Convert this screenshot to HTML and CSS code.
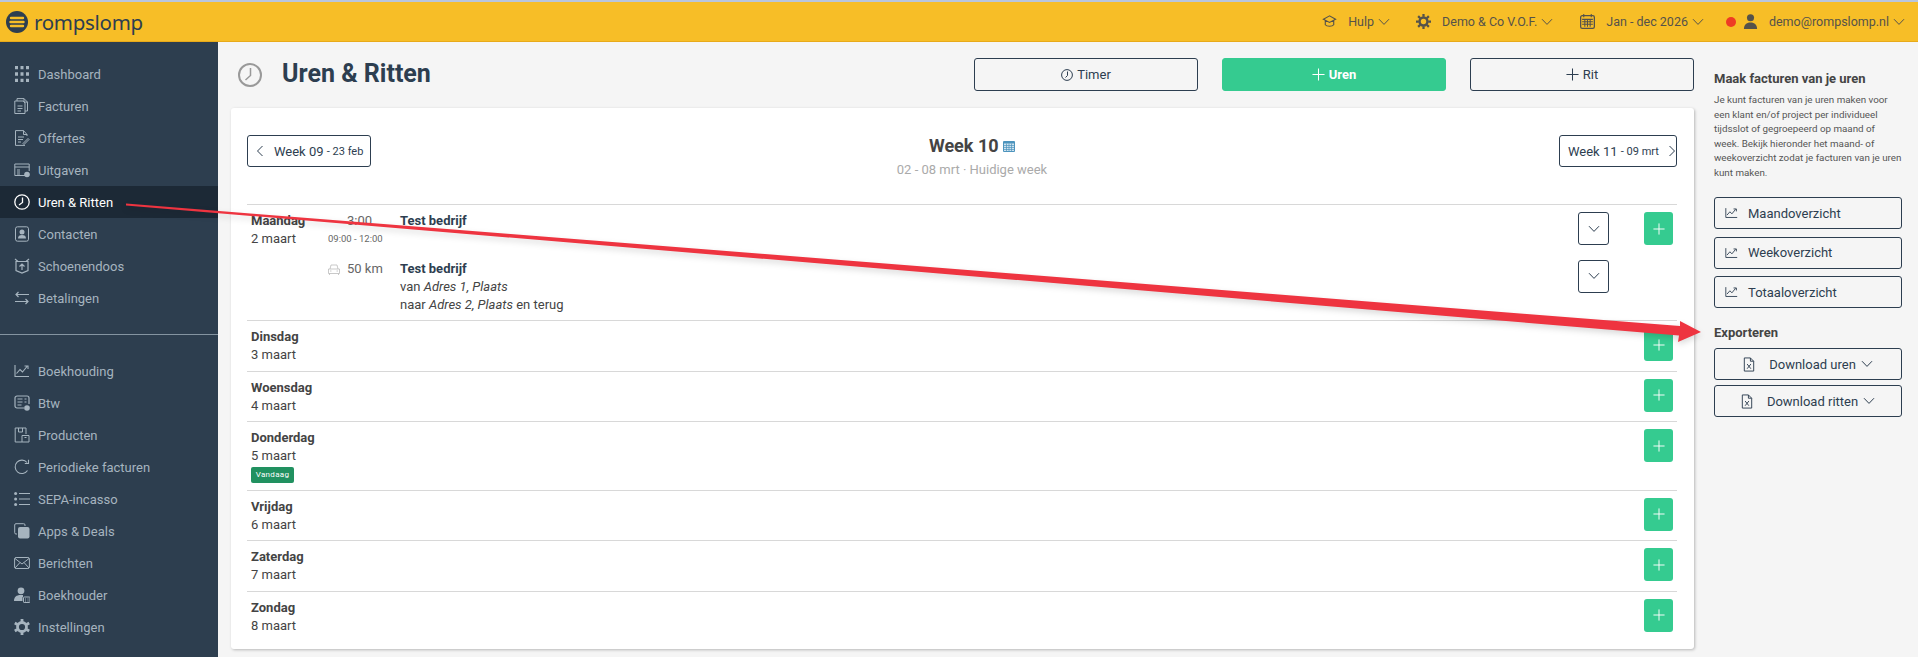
FILE: index.html
```html
<!DOCTYPE html>
<html lang="nl">
<head>
  <meta charset="UTF-8">
  <title>Uren &amp; Ritten - rompslomp</title>
  <link rel="stylesheet" href="styles.css">
</head>
<body>
  <svg class="defs" width="0" height="0">
    <symbol id="chev" viewBox="0 0 12 8"><path d="M1 1.200l5 5.200 5-5.200" fill="none" stroke="currentColor" stroke-width="1"/></symbol>
    <symbol id="plus" viewBox="0 0 14 14"><path d="M7 .5v13M.5 7h13" fill="none" stroke="currentColor" stroke-width="1.100"/></symbol>
    <symbol id="chart" viewBox="0 0 16 14"><path d="M1 1v11.500h14M2.500 9.500l3.500-4 2.500 2.500 4.500-5.500M10.500 2h3.500v3" fill="none" stroke="currentColor" stroke-width="1.100"/></symbol>
    <symbol id="xls" viewBox="0 0 12 16"><path d="M1 1h6.500L11 4.500V15H1zM7.500 1v3.500H11" fill="none" stroke="currentColor" stroke-width="1"/><path d="M4 7.500l4 5M8 7.500l-4 5" fill="none" stroke="currentColor" stroke-width="1"/></symbol>
  </svg>

  <header class="topbar">
    <div class="logo">
      <svg class="logo-mark" viewBox="0 0 22 22"><circle cx="11" cy="11" r="11" fill="#2d3e50"/><path d="M5 7h12M4.500 11h13M5 15h12" stroke="#f7be27" stroke-width="2.400" stroke-linecap="round"/></svg>
      <span class="logo-text">rompslomp</span>
    </div>
    <nav class="topnav">
      <a class="topnav-item topnav-hulp">
        <svg class="top-icon" viewBox="0 0 16 14"><path d="M8 1L1.500 4.500 8 8l6.500-3.500zM3.500 6v4.500C5 12.500 11 12.500 12.500 10.500V6" fill="none" stroke="currentColor" stroke-width="1.200"/></svg>
        <span>Hulp</span>
        <svg class="top-chev"><use href="#chev"/></svg>
      </a>
      <a class="topnav-item topnav-org">
        <svg class="top-icon" viewBox="0 0 16 16"><circle cx="8" cy="8" r="4.200" fill="none" stroke="currentColor" stroke-width="2.600"/><path d="M8 0v3M8 13v3M0 8h3M13 8h3M2.300 2.300l2.200 2.200M11.500 11.500l2.200 2.200M2.300 13.700l2.200-2.200M11.500 4.500l2.200-2.200" stroke="currentColor" stroke-width="2.400"/></svg>
        <span>Demo &amp; Co V.O.F.</span>
        <svg class="top-chev"><use href="#chev"/></svg>
      </a>
      <a class="topnav-item topnav-period">
        <svg class="top-icon" viewBox="0 0 14 14"><rect x=".6" y="1.600" width="12.800" height="11.800" rx="1.500" fill="none" stroke="currentColor" stroke-width="1.200"/><path d="M3.500 0v3M10.500 0v3M2 5h10M2 7.300h10M2 9.600h10M4.500 5v7M7 5v7M9.500 5v7" stroke="currentColor" stroke-width="1"/></svg>
        <span>Jan - dec 2026</span>
        <svg class="top-chev"><use href="#chev"/></svg>
      </a>
      <a class="topnav-item topnav-user">
        <span class="status-dot"></span>
        <svg class="top-icon user-icon" viewBox="0 0 14 16"><circle cx="7" cy="4" r="3.800" fill="currentColor"/><path d="M0 16c0-4.500 2.500-7 7-7s7 2.500 7 7z" fill="currentColor"/></svg>
        <span>demo@rompslomp.nl</span>
        <svg class="top-chev"><use href="#chev"/></svg>
      </a>
    </nav>
  </header>

  <div class="shell">
    <aside class="sidebar">
      <ul class="side-list">
        <li class="side-item"><svg class="side-icon" viewBox="0 0 16 16"><path d="M1 1.500h3M6.500 1.500h3M12 1.500h3M1 8h3M6.500 8h3M12 8h3M1 14.500h3M6.500 14.500h3M12 14.500h3" stroke="currentColor" stroke-width="3.400"/></svg>Dashboard</li>
        <li class="side-item"><svg class="side-icon" viewBox="0 0 16 16"><path d="M3 3V.6h7l3.500 3.500V13H11M10 .6v3.500h3.500M.8 3h8.500L11 5v10.500H.8zM3.500 8h5M3.500 10.500h5M3.500 13h3.500" fill="none" stroke="currentColor"/></svg>Facturen</li>
        <li class="side-item"><svg class="side-icon" viewBox="0 0 16 16"><path d="M13 6V4.500L9.500.6H1.500v14.800H11M9.500.6v3.900H13M4 7h6M4 9.500h5M4 12h3M9 13.500l5-5 1 1-5 5z" fill="none" stroke="currentColor"/></svg>Offertes</li>
        <li class="side-item"><svg class="side-icon" viewBox="0 0 16 16"><path d="M11 13.500H.8V2h14.400v7M.8 5h14.400M3 8h3M3 10h3M3 12h3" fill="none" stroke="currentColor"/><circle cx="13" cy="12.500" r="2.800" fill="currentColor"/></svg>Uitgaven</li>
        <li class="side-item side-item--active"><svg class="side-icon" viewBox="0 0 16 16"><circle cx="8" cy="8" r="7.200" fill="none" stroke="currentColor" stroke-width="1.300"/><path d="M8.500 3.500V8.500L5 11" fill="none" stroke="currentColor" stroke-width="1.300"/></svg>Uren &amp; Ritten</li>
        <li class="side-item"><svg class="side-icon" viewBox="0 0 16 16"><rect x="1.500" y=".8" width="13" height="14.400" rx="2" fill="none" stroke="currentColor"/><circle cx="8" cy="6" r="2.500" fill="currentColor"/><path d="M4 12.500c0-2.500 1.500-3.500 4-3.500s4 1 4 3.500z" fill="currentColor"/></svg>Contacten</li>
        <li class="side-item"><svg class="side-icon" viewBox="0 0 16 16"><path d="M2 3.500h12v9L8 15l-6-2.500zM1 1l3 2.500M15 1l-3 2.500M8 12V6M5.500 8.500L8 6l2.500 2.500" fill="none" stroke="currentColor" stroke-width="1.200"/></svg>Schoenendoos</li>
        <li class="side-item"><svg class="side-icon" viewBox="0 0 16 16"><path d="M15 4.500H2M4.500 2L2 4.500 4.500 7M1 11.500h13M11.500 9l2.500 2.500-2.500 2.500" fill="none" stroke="currentColor" stroke-width="1.200"/></svg>Betalingen</li>
      </ul>
      <hr class="side-sep">
      <ul class="side-list">
        <li class="side-item"><svg class="side-icon"><use href="#chart"/></svg>Boekhouding</li>
        <li class="side-item"><svg class="side-icon" viewBox="0 0 16 16"><path d="M10 13H3a2 2 0 0 1-2-2V3a2 2 0 0 1 2-2h10a2 2 0 0 1 2 2v6M3.500 4h5M3.500 7h5M3.500 10h4M10.500 4h2M10.500 7h2" fill="none" stroke="currentColor" stroke-width="1.200"/><circle cx="13" cy="13" r="2.800" fill="currentColor"/></svg>Btw</li>
        <li class="side-item"><svg class="side-icon" viewBox="0 0 16 16"><path d="M8 15H1.200V1H12v6M4.500 1v4h4V1M8 8.500h7v6.500H8zM10.500 10.500h2" fill="none" stroke="currentColor"/></svg>Producten</li>
        <li class="side-item"><svg class="side-icon" viewBox="0 0 16 16"><path d="M13.500 11.500A6.700 6.700 0 1 1 13 3.500M14.500.8v3.700h-3.700" fill="none" stroke="currentColor" stroke-width="1.100"/></svg>Periodieke facturen</li>
        <li class="side-item"><svg class="side-icon" viewBox="0 0 16 16"><path d="M5 2.500h11M5 8h11M5 13.500h11" stroke="currentColor" stroke-width="1.200"/><circle cx="1.600" cy="2.500" r="1.500" fill="currentColor"/><circle cx="1.600" cy="8" r="1.500" fill="currentColor"/><circle cx="1.600" cy="13.500" r="1.500" fill="currentColor"/></svg>SEPA-incasso</li>
        <li class="side-item"><svg class="side-icon" viewBox="0 0 16 16"><path d="M3 11H2a1.300 1.300 0 0 1-1.300-1.300V2A1.300 1.300 0 0 1 2 .7h7.500A1.300 1.300 0 0 1 11 2v1" fill="none" stroke="currentColor"/><rect x="4" y="4" width="11.500" height="11.500" rx="2" fill="currentColor"/></svg>Apps &amp; Deals</li>
        <li class="side-item"><svg class="side-icon" viewBox="0 0 16 16"><rect x=".6" y="2.500" width="14.800" height="11" rx="1.500" fill="none" stroke="currentColor"/><path d="M1 3.500L8 9l7-5.500M1 13l5-5.500M15 13l-5-5.500" fill="none" stroke="currentColor"/></svg>Berichten</li>
        <li class="side-item"><svg class="side-icon" viewBox="0 0 16 16"><circle cx="7" cy="3.800" r="3.400" fill="currentColor"/><path d="M0 14c0-4 2.500-6 6.500-6H9v2H8.500v4z" fill="currentColor"/><rect x="9.500" y="10" width="6.500" height="5.500" rx=".6" fill="none" stroke="currentColor"/><path d="M11 12h1M13.500 12h1M11 14h1M13.500 14h1" stroke="currentColor"/></svg>Boekhouder</li>
        <li class="side-item"><svg class="side-icon" viewBox="0 0 16 16"><circle cx="8" cy="8" r="4.500" fill="none" stroke="currentColor" stroke-width="2.800"/><path d="M8 0v3M8 13v3M.8 4l2.600 1.500M12.600 10.500L15.200 12M.8 12l2.600-1.500M12.600 5.500L15.200 4" stroke="currentColor" stroke-width="2.800"/></svg>Instellingen</li>
      </ul>
    </aside>

    <main class="content">
      <div class="page-head">
        <svg class="page-icon" viewBox="0 0 24 24"><circle cx="12" cy="12" r="11" fill="none" stroke="currentColor" stroke-width="2"/><path d="M12.500 5v7.500L7.500 17" fill="none" stroke="currentColor" stroke-width="1.500"/></svg>
        <h1 class="page-title">Uren &amp; Ritten</h1>
        <div class="page-actions">
          <a class="btn btn-action">
            <svg class="btn-clock" viewBox="0 0 12 12"><circle cx="6" cy="6" r="5.400" fill="none" stroke="currentColor"/><path d="M6.500 2.500V6.500L4.500 8.500" fill="none" stroke="currentColor"/></svg>
            Timer
          </a>
          <a class="btn btn-action btn-green"><svg class="btn-plus"><use href="#plus"/></svg>Uren</a>
          <a class="btn btn-action"><svg class="btn-plus"><use href="#plus"/></svg>Rit</a>
        </div>
      </div>

      <section class="card">
        <div class="week-head">
          <a class="btn week-btn week-prev"><svg class="week-chev" viewBox="0 0 8 12"><path d="M6.500 1L1.500 6l5 5" fill="none" stroke="currentColor"/></svg>Week 09&nbsp;<small>- 23 feb</small></a>
          <div class="week-title">
            <h2>Week 10 <svg class="week-cal" viewBox="0 0 12 12"><rect y="1" width="12" height="11" rx="1" fill="#4d94bd"/><rect x="1" y="3.500" width="10" height="7.500" fill="#cfe3ef"/><path d="M1 5.500h10M1 7.500h10M1 9.500h10M3.500 3.500v7.500M6 3.500v7.500M8.500 3.500v7.500" stroke="#4d94bd" stroke-width=".7"/></svg></h2>
            <p>02 - 08 mrt &middot; Huidige week</p>
          </div>
          <a class="btn week-btn week-next">Week 11&nbsp;<small>- 09 mrt</small><svg class="week-chev" viewBox="0 0 8 12"><path d="M1.500 1l5 5-5 5" fill="none" stroke="currentColor"/></svg></a>
        </div>

        <div class="day">
          <div class="day-label"><strong>Maandag</strong><span>2 maart</span></div>
          <div class="entries">
            <div class="entry entry--work">
              <div class="entry-time"><span class="entry-hours">3:00</span><small>09:00 - 12:00</small></div>
              <div class="entry-info"><strong>Test bedrijf</strong></div>
              <a class="btn chev-btn"><svg><use href="#chev"/></svg></a>
            </div>
            <div class="entry">
              <div class="entry-time entry-time--ride">
                <svg class="car-icon" viewBox="0 0 12 11"><path d="M2 5l1-4h6l1 4M.5 5h11v4.500H.5zM1.500 9.500V11M10.500 9.500V11M2 7h1.500M8.500 7H10" fill="none" stroke="currentColor" stroke-width=".8"/></svg>
                <span>50 km</span>
              </div>
              <div class="entry-info">
                <strong>Test bedrijf</strong>
                <span>van <em>Adres 1, Plaats</em></span>
                <span>naar <em>Adres 2, Plaats</em> en terug</span>
              </div>
              <a class="btn chev-btn"><svg><use href="#chev"/></svg></a>
            </div>
          </div>
          <a class="add-btn"><svg><use href="#plus"/></svg></a>
        </div>
        <div class="day">
          <div class="day-label"><strong>Dinsdag</strong><span>3 maart</span></div>
          <div class="entries"></div>
          <a class="add-btn"><svg><use href="#plus"/></svg></a>
        </div>
        <div class="day">
          <div class="day-label"><strong>Woensdag</strong><span>4 maart</span></div>
          <div class="entries"></div>
          <a class="add-btn"><svg><use href="#plus"/></svg></a>
        </div>
        <div class="day">
          <div class="day-label"><strong>Donderdag</strong><span>5 maart</span><i class="today">Vandaag</i></div>
          <div class="entries"></div>
          <a class="add-btn"><svg><use href="#plus"/></svg></a>
        </div>
        <div class="day">
          <div class="day-label"><strong>Vrijdag</strong><span>6 maart</span></div>
          <div class="entries"></div>
          <a class="add-btn"><svg><use href="#plus"/></svg></a>
        </div>
        <div class="day">
          <div class="day-label"><strong>Zaterdag</strong><span>7 maart</span></div>
          <div class="entries"></div>
          <a class="add-btn"><svg><use href="#plus"/></svg></a>
        </div>
        <div class="day">
          <div class="day-label"><strong>Zondag</strong><span>8 maart</span></div>
          <div class="entries"></div>
          <a class="add-btn"><svg><use href="#plus"/></svg></a>
        </div>
      </section>
    </main>

    <aside class="rightbar">
      <h3 class="right-title">Maak facturen van je uren</h3>
      <p class="right-text">Je kunt facturen van je uren maken voor een klant en/of project per individueel tijdsslot of gegroepeerd op maand of week. Bekijk hieronder het maand- of weekoverzicht zodat je facturen van je uren kunt maken.</p>
      <div class="right-group">
        <a class="btn right-btn"><svg class="right-chart"><use href="#chart"/></svg>Maandoverzicht</a>
        <a class="btn right-btn"><svg class="right-chart"><use href="#chart"/></svg>Weekoverzicht</a>
        <a class="btn right-btn"><svg class="right-chart"><use href="#chart"/></svg>Totaaloverzicht</a>
      </div>
      <h3 class="right-title right-title--export">Exporteren</h3>
      <div class="right-group right-group--tight">
        <a class="btn right-btn right-btn--center"><svg class="right-xls"><use href="#xls"/></svg>Download uren<svg class="right-chev"><use href="#chev"/></svg></a>
        <a class="btn right-btn right-btn--center"><svg class="right-xls"><use href="#xls"/></svg>Download ritten<svg class="right-chev"><use href="#chev"/></svg></a>
      </div>
    </aside>
  </div>

  <!-- annotation drawn over the screenshot -->
  <svg class="annotation" viewBox="0 0 1918 657">
    <path d="M126 203.600L1680 326V321L1701 332 1678 342 1679 335.500 126 205.400Z" fill="#ee3440"/>
  </svg>
</body>
</html>
```

FILE: styles.css
```css
* {
  box-sizing: border-box;
}

html, body {
  margin: 0;
  height: 657px;
  overflow: hidden;
}

body {
  position: relative;
  background: #f5f5f5;
  color: #444;
  font-family: 'Roboto', sans-serif;
  font-size: 13px;
}

.defs {
  position: absolute;
}

/* top bar */
.topbar {
  height: 42px;
  display: flex;
  align-items: center;
  justify-content: space-between;
  background: #f7be27;
  border-top: 2px solid #b9c6dc;
  border-bottom: 1px solid #e8aa1a;
  padding: 0 13px 0 6px;
}

.logo {
  display: flex;
  align-items: center;
  gap: 6px;
}

.logo-mark {
  width: 22px;
  height: 22px;
}

.logo-text {
  color: #2d3e50;
  font-family: 'Noto Sans', sans-serif;
  font-size: 20.5px;
  line-height: 30px;
  letter-spacing: -0.3px;
}

.topnav {
  display: flex;
  align-items: center;
}

.topnav-item {
  display: flex;
  align-items: center;
  color: #55524a;
  font-size: 12.5px;
}

.topnav-hulp { margin-right: 26px; }
.topnav-org { margin-right: 27px; }
.topnav-period { margin-right: 22px; }

.top-icon {
  width: 15px;
  height: 15px;
  margin-right: 11px;
}

.top-chev {
  width: 12px;
  height: 8px;
  margin-left: 4px;
}

.status-dot {
  width: 10px;
  height: 10px;
  border-radius: 50%;
  background: #ee3b24;
  margin-right: 7px;
}

/* layout */
.shell {
  display: flex;
  height: 615px;
}

.sidebar {
  width: 218px;
  flex: none;
  background: #2d3e4f;
  padding-top: 16px;
}

.side-list {
  list-style: none;
  margin: 0;
  padding: 0;
}

.side-item {
  height: 32px;
  display: flex;
  align-items: center;
  color: #a6b4bf;
  font-size: 13px;
  padding-left: 14px;
}

.side-item--active {
  background: #1c2936;
  color: #fff;
}

.side-icon {
  width: 16px;
  height: 16px;
  margin-right: 8px;
  flex: none;
}

.side-sep {
  border: 0;
  border-top: 1px solid #8494a1;
  margin: 20px 0;
}

.content {
  width: 1476px;
  padding: 16px 0 0 13px;
}

/* heading */
.page-head {
  display: flex;
  align-items: center;
  height: 33px;
  margin-bottom: 17px;
}

.page-icon {
  width: 24px;
  height: 24px;
  margin: 0 20px 0 7px;
  color: #999;
}

.page-title {
  margin: 0 0 2px;
  color: #2d3e50;
  font-size: 25px;
  font-weight: 700;
}

.page-actions {
  display: flex;
  gap: 24px;
  margin-left: auto;
}

.btn {
  display: flex;
  align-items: center;
  border: 1px solid #2d3e50;
  border-radius: 3px;
  color: #2d3e50;
}

.btn-action {
  width: 224px;
  height: 33px;
  justify-content: center;
}

.btn-green {
  background: #35cb90;
  border-color: #35cb90;
  color: #fff;
  font-weight: 700;
}

.btn-clock {
  width: 12px;
  height: 12px;
  margin-right: 4px;
}

.btn-plus {
  width: 13px;
  height: 13px;
  margin-right: 4px;
}

/* card */
.card {
  width: 1463px;
  height: 541px;
  background: #fff;
  border-radius: 3px;
  box-shadow: 1px 1px 3px rgba(0, 0, 0, 0.25);
  padding: 27px 17px 0 16px;
}

.week-head {
  display: grid;
  grid-template-columns: 1fr auto 1fr;
  height: 69px;
}

.week-btn {
  height: 32px;
  background: #fff;
  white-space: nowrap;
}

.week-btn small {
  font-size: 11px;
}

.week-prev {
  justify-self: start;
  width: 124px;
  padding-left: 8px;
}

.week-next {
  justify-self: end;
  width: 118px;
  padding-left: 8px;
}

.week-chev {
  width: 8px;
  height: 12px;
  flex: none;
}

.week-prev .week-chev {
  margin-right: 10px;
}

.week-next .week-chev {
  margin-left: 9px;
}

.week-title {
  text-align: center;
  padding-left: 20px;
}

.week-title h2 {
  margin: 0;
  color: #444;
  font-size: 18px;
  line-height: 22px;
}

.week-cal {
  width: 12px;
  height: 12px;
}

.week-title p {
  margin: 4px 0 0;
  color: #aaa;
  font-size: 13px;
  line-height: 18px;
}

/* day rows */
.day {
  display: flex;
  border-top: 1px solid #d8d8d8;
  padding: 7px 4px 6.5px 0;
  line-height: 18px;
}

.day-label {
  width: 81px;
  flex: none;
  padding-left: 4px;
  display: flex;
  flex-direction: column;
  align-items: flex-start;
  color: #444;
}

.today {
  margin-top: 2px;
  height: 16px;
  width: 43px;
  background: #219160;
  border-radius: 2px;
  color: #fff;
  font-size: 8px;
  font-style: normal;
  line-height: 16px;
  text-align: center;
  letter-spacing: 0.3px;
}

.entries {
  flex: 1;
  display: flex;
  flex-direction: column;
  gap: 14.5px;
}

.entry {
  display: flex;
}

.entry--work {
  height: 33px;
}

.entry-time {
  width: 72px;
  flex: none;
  color: #666;
}

.entry-hours {
  display: block;
  width: 44px;
  text-align: right;
}

.entry-time small {
  display: block;
  font-size: 9.5px;
  white-space: nowrap;
}

.entry-time--ride {
  display: flex;
  align-items: flex-start;
}

.car-icon {
  width: 12px;
  height: 11px;
  margin: 4px 7px 0 0;
  color: #bbb;
}

.entry-info {
  flex: 1;
  display: flex;
  flex-direction: column;
  align-items: flex-start;
}

.entry-info strong {
  color: #2d3e50;
}

.chev-btn {
  width: 31px;
  height: 33px;
  justify-content: center;
  flex: none;
}

.chev-btn svg {
  width: 12px;
  height: 8px;
}

.add-btn {
  width: 29px;
  height: 33px;
  margin-left: 35px;
  flex: none;
  display: flex;
  align-items: center;
  justify-content: center;
  background: #35cb90;
  border-radius: 3px;
  color: #fff;
}

.add-btn svg {
  width: 12px;
  height: 12px;
}

/* right column */
.rightbar {
  width: 188px;
  margin-left: 20px;
  padding-top: 28px;
  flex: none;
}

.right-title {
  margin: 0;
  color: #444;
  font-size: 13px;
  line-height: 18px;
}

.right-text {
  margin: 5px 0 17px;
  color: #555;
  font-size: 9.8px;
  line-height: 14.5px;
}

.right-group {
  display: flex;
  flex-direction: column;
  gap: 7.5px;
}

.right-group--tight {
  gap: 5px;
}

.right-title--export {
  margin: 16px 0 6px;
}

.right-btn {
  height: 32px;
  padding-left: 10px;
}

.right-btn--center {
  justify-content: center;
  padding-left: 0;
}

.right-chart {
  width: 13px;
  height: 12px;
  margin-right: 10px;
}

.right-xls {
  width: 12px;
  height: 15px;
  margin-right: 14px;
}

.right-chev {
  width: 12px;
  height: 8px;
  margin-left: 5px;
}

.annotation {
  position: absolute;
  left: 0;
  top: 0;
  width: 1918px;
  height: 657px;
  pointer-events: none;
  filter: drop-shadow(0 3px 3px rgba(0, 0, 0, 0.15));
}
```
